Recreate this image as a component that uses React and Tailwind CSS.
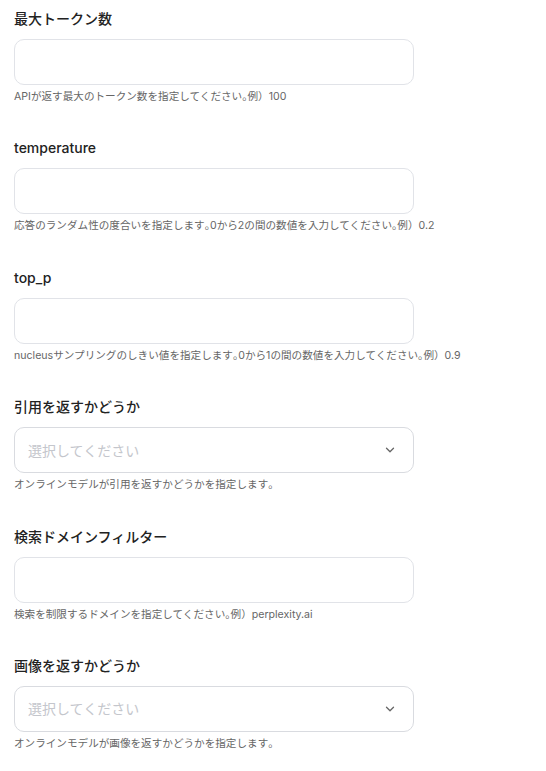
import { ChevronDown } from "lucide-react";

const fields = [
  { label: "最大トークン数", help: "APIが返す最大のトークン数を指定してください。例）100" },
  { label: "temperature", help: "応答のランダム性の度合いを指定します。0から2の間の数値を入力してください。例）0.2" },
  { label: "top_p", help: "nucleusサンプリングのしきい値を指定します。0から1の間の数値を入力してください。例）0.9" },
  { label: "引用を返すかどうか", help: "オンラインモデルが引用を返すかどうかを指定します。", select: true },
  { label: "検索ドメインフィルター", help: "検索を制限するドメインを指定してください。例）perplexity.ai" },
  { label: "画像を返すかどうか", help: "オンラインモデルが画像を返すかどうかを指定します。", select: true },
];

// the full stop is set half-width, the rest stays full-width
function HelpText({ text }) {
  return text.split(/(。)/).map((part, i) =>
    part === "。" ? (
      <span key={i} className="[font-feature-settings:'halt']">{part}</span>
    ) : (
      part
    )
  );
}

function Field({ label, help, select }) {
  return (
    <div className="flex flex-col">
      <label className="text-[14px] leading-[20px] font-medium text-[#222]">{label}</label>
      {select ? (
        <div className="mt-[10px] h-[46px] w-[400px] rounded-[10px] border border-[#d9dbe0] bg-white flex items-center justify-between pl-[13px] pr-[16px]">
          <span className="text-[14px] text-[#c4c6cc]">選択してください</span>
          <ChevronDown size={14} strokeWidth={2.25} className="text-[#666]" />
        </div>
      ) : (
        <input className="mt-[10px] h-[46px] w-[400px] rounded-[10px] border border-[#e1e3e8] bg-white px-3 text-[14px] outline-none" />
      )}
      <p className="mt-[5px] text-[10.6px] leading-[14px] text-[#666]">
        <HelpText text={help} />
      </p>
    </div>
  );
}

export default function App() {
  return (
    <div
      className="min-h-screen bg-white pl-[14px] pt-[9px] flex flex-col gap-[34.4px]"
      style={{ fontFamily: '"Inter", "Noto Sans CJK JP", sans-serif' }}
    >
      {fields.map((f) => (
        <Field key={f.label} {...f} />
      ))}
    </div>
  );
}
